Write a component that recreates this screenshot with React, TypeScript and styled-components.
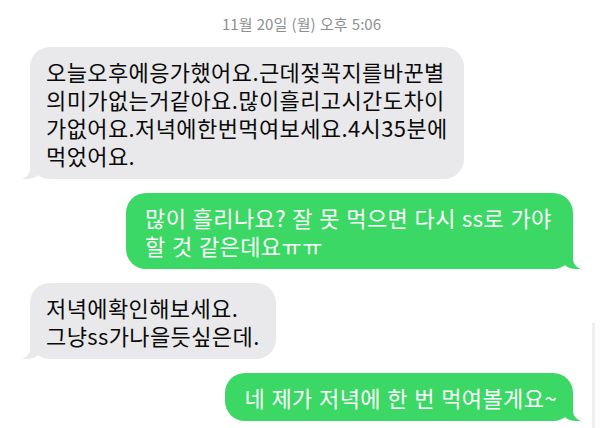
import React from 'react'
import styled, { createGlobalStyle, css } from 'styled-components'

const GlobalStyle = createGlobalStyle`
  html, body {
    margin: 0;
    padding: 0;
    background: #ffffff;
  }
  body {
    font-family: "Noto Sans CJK KR", "Noto Sans", sans-serif;
  }
`

const Screen = styled.div`
  position: relative;
  width: 600px;
  height: 428px;
  overflow: hidden;
  background: #fff;
  box-sizing: border-box;
  padding: 14px 27px 0 30px;
  display: flex;
  flex-direction: column;
`

const Stamp = styled.div`
  align-self: center;
  font-size: 15px;
  line-height: 20px;
  color: #8e8e93;
  margin-bottom: 13px;
  word-spacing: 1px;
`

const Thread = styled.div`
  display: flex;
  flex-direction: column;
  gap: 14px;
`

const Bubble = styled.div<{ $mine?: boolean }>`
  position: relative;
  max-width: 447px;
  box-sizing: border-box;
  padding: 10px 16px;
  border-radius: 20px;
  font-size: 22px;
  line-height: 28px;
  letter-spacing: 0.4px;
  word-spacing: 1px;
  white-space: nowrap;
  background: ${(p) => (p.$mine ? '#3bd865' : '#e9e9eb')};
  color: ${(p) => (p.$mine ? '#ffffff' : '#0a0a0a')};
  align-self: ${(p) => (p.$mine ? 'flex-end' : 'flex-start')};

  &::before,
  &::after {
    content: '';
    position: absolute;
    bottom: 0;
    height: 22px;
  }

  ${(p) =>
    p.$mine
      ? css`
          padding-left: 19px;
          &::before {
            right: -7px;
            width: 20px;
            background: #3bd865;
            border-bottom-left-radius: 16px 14px;
          }
          &::after {
            right: -10px;
            width: 10px;
            background: #fff;
            border-bottom-left-radius: 10px;
          }
        `
      : css`
          &::before {
            left: -7px;
            width: 20px;
            background: #e9e9eb;
            border-bottom-right-radius: 16px 14px;
          }
          &::after {
            left: -10px;
            width: 10px;
            background: #fff;
            border-bottom-right-radius: 10px;
          }
        `}
`

const ScrollIndicator = styled.div`
  position: absolute;
  right: 5px;
  top: 323px;
  bottom: 0;
  width: 3px;
  background: #efeff1;
`

export default function App() {
  return (
    <>
      <GlobalStyle />
      <Screen>
        <Stamp>11월 20일 (월) 오후 5:06</Stamp>
        <Thread>
          <Bubble>
            오늘오후에응가했어요.근데젖꼭지를바꾼별
            <br />
            의미가없는거같아요.많이흘리고시간도차이
            <br />
            가없어요.저녁에한번먹여보세요.4시35분에
            <br />
            먹었어요.
          </Bubble>
          <Bubble $mine style={{ width: 447 }}>
            많이 흘리나요? 잘 못 먹으면 다시 ss로 가야
            <br />
            할 것 같은데요ㅠㅠ
          </Bubble>
          <Bubble>
            저녁에확인해보세요.
            <br />
            그냥ss가나을듯싶은데.
          </Bubble>
          <Bubble $mine>네 제가 저녁에 한 번 먹여볼게요~</Bubble>
        </Thread>
        <ScrollIndicator />
      </Screen>
    </>
  )
}
